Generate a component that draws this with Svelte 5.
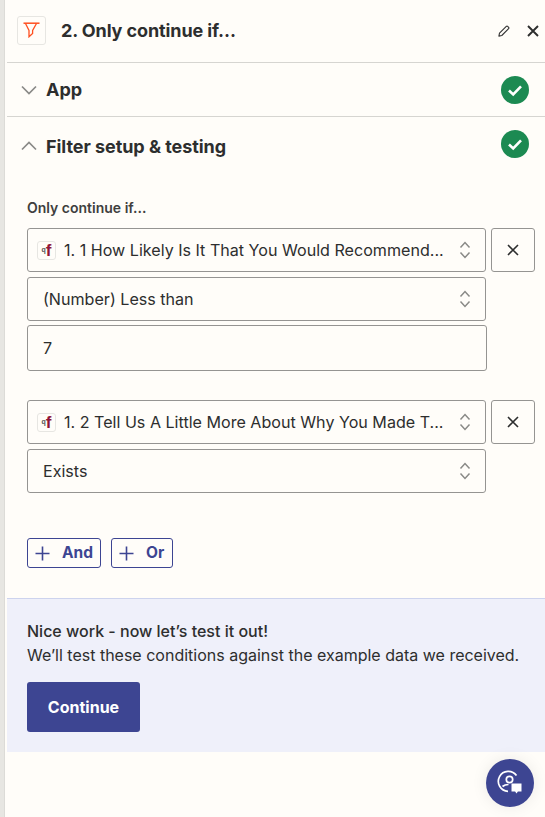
<script>
  const groups = [
    { field: '1. 1 How Likely Is It That You Would Recommend...', op: '(Number) Less than', value: '7' },
    { field: '1. 2 Tell Us A Little More About Why You Made T...', op: 'Exists', value: null }
  ];
</script>

<div class="page">
  <aside class="strip"></aside>
  <main class="panel">
    <header class="head">
      <div class="logo">
        <svg width="17" height="16" viewBox="0 0 17 16" fill="none"><path d="M.5 1.2h16" stroke="#ff4f1f" stroke-width="1.5"/><path d="M2.5 1.5 6 8.5v6.3l3.6-3.3V8.5l3.9-7" stroke="#ff4f1f" stroke-width="1.3"/></svg>
      </div>
      <h1>2. Only continue if...</h1>
      <div class="head-actions">
        <svg width="14" height="14" viewBox="0 0 14 14" fill="none"><path d="M2.5 9.2 9.3 2.4a1 1 0 0 1 1.4 0l.9.9a1 1 0 0 1 0 1.4L4.8 11.5l-2.9.6.6-2.9Z" stroke="#333" stroke-width="1.1" stroke-linejoin="round"/></svg>
        <svg width="14" height="14" viewBox="0 0 14 14" fill="none"><path d="m2 2 10 10M12 2 2 12" stroke="#2d2e2e" stroke-width="1.9"/></svg>
      </div>
    </header>

    <section class="row app-row">
      <svg class="chev" width="16" height="10" viewBox="0 0 16 10" fill="none"><path d="m1 1.5 7 7 7-7" stroke="#8a8a87" stroke-width="1.7"/></svg>
      <h2>App</h2>
      <svg class="ok" width="28" height="28" viewBox="0 0 28 28"><circle cx="14" cy="14" r="14" fill="#1c8a52"/><path d="m8 14.5 4.2 4L20 10.3" fill="none" stroke="#fff" stroke-width="2.6"/></svg>
    </section>

    <section class="row filter-row">
      <svg class="chev" width="16" height="10" viewBox="0 0 16 10" fill="none"><path d="m1 8.5 7-7 7 7" stroke="#8a8a87" stroke-width="1.7"/></svg>
      <h2>Filter setup &amp; testing</h2>
      <svg class="ok" width="28" height="28" viewBox="0 0 28 28"><circle cx="14" cy="14" r="14" fill="#1c8a52"/><path d="m8 14.5 4.2 4L20 10.3" fill="none" stroke="#fff" stroke-width="2.6"/></svg>
    </section>

    <section class="form">
      <div class="label">Only continue if...</div>
      {#each groups as g}
        <div class="group">
          <div class="line">
            <div class="field select">
              <span class="app-badge"><i class="mini">q</i><b>f</b></span>
              <span class="txt">{g.field}</span>
              <svg class="updown" width="12" height="18" viewBox="0 0 12 18" fill="none"><path d="m1.5 6.5 4.5-5 4.5 5M1.5 11.5l4.5 5 4.5-5" stroke="#8a8a87" stroke-width="1.5"/></svg>
            </div>
            <button class="del" aria-label="Remove">
              <svg width="12" height="12" viewBox="0 0 12 12" fill="none"><path d="m1 1 10 10M11 1 1 11" stroke="#2d2e2e" stroke-width="1.6"/></svg>
            </button>
          </div>
          <div class="field select op">
            <span class="txt">{g.op}</span>
            <svg class="updown" width="12" height="18" viewBox="0 0 12 18" fill="none"><path d="m1.5 6.5 4.5-5 4.5 5M1.5 11.5l4.5 5 4.5-5" stroke="#8a8a87" stroke-width="1.5"/></svg>
          </div>
          {#if g.value}
            <div class="field value"><span class="txt">{g.value}</span></div>
          {/if}
        </div>
      {/each}

      <div class="adders">
        <button class="add and"><svg width="15" height="15" viewBox="0 0 15 15" fill="none"><path d="M7.5.5v14M.5 7.5h14" stroke="#3d4592" stroke-width="1.6"/></svg>And</button>
        <button class="add or"><svg width="15" height="15" viewBox="0 0 15 15" fill="none"><path d="M7.5.5v14M.5 7.5h14" stroke="#3d4592" stroke-width="1.6"/></svg>Or</button>
      </div>
    </section>

    <section class="notice">
      <strong>Nice work - now let’s test it out!</strong>
      <p>We’ll test these conditions against the example data we received.</p>
      <button class="continue">Continue</button>
    </section>
  </main>

  <button class="help" aria-label="Help">
    <svg width="26" height="26" viewBox="0 0 26 26" fill="none">
      <path d="M19.5 5.5A10 10 0 1 0 11 21.3" stroke="#fff" stroke-width="1.7"/>
      <circle cx="12.5" cy="9.5" r="3.2" stroke="#fff" stroke-width="1.7"/>
      <path d="M5.5 16.5c1.5-1.3 3.4-2 6-2" stroke="#fff" stroke-width="1.7"/>
      <path d="M14.5 13.5h10v8h-3.6l-1.4 2-1.4-2h-3.6Z" fill="#fff"/>
    </svg>
  </button>
</div>

<style>
  :global(body) { margin: 0; background: #fffdf9; }
  .page {
    position: relative;
    display: flex;
    width: 545px;
    height: 817px;
    overflow: hidden;
    background: #fffdf9;
    font-family: Inter, "Liberation Sans", sans-serif;
    color: #2d2e2e;
  }
  .strip { width: 4px; flex: none; background: #e7e6e2; border-right: 1px solid #dcdbd7; }
  .panel { flex: 1; min-width: 0; margin-left: 2px; display: flex; flex-direction: column; }
  .panel > * { flex: none; }
  .head {
    height: 62px;
    box-sizing: content-box;
    display: flex;
    align-items: center;
    border-bottom: 1px solid #d6d5d1;
    padding-left: 10px;
  }
  .logo {
    width: 29px; height: 29px; box-sizing: border-box;
    margin-top: -2px;
    border: 1px solid #e7e6e2; border-radius: 3px;
    display: flex; align-items: center; justify-content: center;
  }
  h1 { margin: 0 0 0 15px; font-size: 18px; font-weight: 650; line-height: 24px; letter-spacing: -0.1px; }
  .head-actions { margin-left: auto; display: flex; align-items: center; gap: 15px; padding-right: 5px; }
  .row { display: flex; align-items: center; padding: 0 16px 0 14px; }
  .app-row { height: 53px; border-bottom: 1px solid #d6d5d1; }
  .filter-row { height: 60px; }
  h2 { margin: 0 0 0 9px; font-size: 18px; font-weight: 650; line-height: 24px; letter-spacing: -0.05px; }
  .chev { flex: none; width: 16px; }
  .ok { margin-left: auto; flex: none; }
  .filter-row .ok { margin-bottom: 6px; }
  .filter-row .chev { margin-bottom: 2px; }
  .form { padding: 21px 10px 0 20px; height: 400px; box-sizing: content-box; }
  .label { font-size: 14px; font-weight: 600; line-height: 20px; color: #403f3e; margin-bottom: 10px; }
  .group { display: flex; flex-direction: column; gap: 5px; margin-bottom: 29px; width: 508px; }
  .line { display: flex; gap: 5px; }
  .field {
    box-sizing: border-box;
    height: 44px;
    display: flex;
    align-items: center;
    border: 1px solid #959492;
    border-radius: 3px;
    background: #fffdf9;
    font-size: 16.1px;
    line-height: 22px;
    padding: 0 15px;
    white-space: nowrap;
    overflow: hidden;
  }
  .line .field { padding-left: 9px; width: 459px; flex: none; }
  .op { width: 459px; }
  .value { width: 460px; height: 46px; margin-top: -1px; }
  .app-badge {
    width: 19px; height: 19px; box-sizing: border-box; flex: none;
    border: 1px solid #e7e6e2; border-radius: 3px;
    display: flex; align-items: center; justify-content: center;
    margin-right: 8px;
    font-family: "Liberation Sans", sans-serif;
    color: #8f1537;
    overflow: hidden;
  }
  .app-badge b { font-size: 17px; line-height: 17px; }
  .mini { font-style: normal; font-size: 7px; font-weight: 700; color: #555; line-height: 10px; }
  .txt { flex: 1; min-width: 0; overflow: hidden; color: #2d2e2e; }
  .updown { flex: none; margin-right: -1px; }
  .del {
    box-sizing: border-box; width: 44px; height: 44px; padding: 0; flex: none;
    border: 1px solid #959492; border-radius: 3px; background: #fffdf9;
    display: flex; align-items: center; justify-content: center;
  }
  .adders { display: flex; gap: 10px; margin-top: 45px; }
  .add {
    box-sizing: border-box; height: 30px; padding: 0 0 1px 7px;
    display: flex; align-items: center; gap: 12px;
    border: 1px solid #3d4592; border-radius: 3px; background: #fffdf9;
    color: #3d4592; font: 650 15.5px/20px Inter, "Liberation Sans", sans-serif;
  }
  .add svg { margin-top: 1px; }
  .and { width: 74px; }
  .or { width: 62px; }
  .notice {
    box-sizing: border-box;
    height: 154px;
    padding: 20px 20px 0;
    background: #eff0fa;
    border-top: 1px solid #cdd3ee;
    font-size: 16px;
    line-height: 24px;
    color: #2d2e2e;
  }
  .notice strong { display: block; font-weight: 500; }
  .notice p { margin: 0; }
  .continue {
    margin-top: 15px;
    display: block;
    width: 113px; height: 50px;
    border: 0; border-radius: 3px;
    background: #3d4592; color: #fff;
    font: 650 16px/20px Inter, "Liberation Sans", sans-serif;
  }
  .help {
    position: absolute; left: 486px; top: 759px;
    width: 48px; height: 48px; border: 0; padding: 0; border-radius: 50%;
    background: #3d4592;
    box-shadow: 0 0 16px rgba(0, 0, 0, 0.08);
    display: flex; align-items: center; justify-content: center;
  }
</style>
